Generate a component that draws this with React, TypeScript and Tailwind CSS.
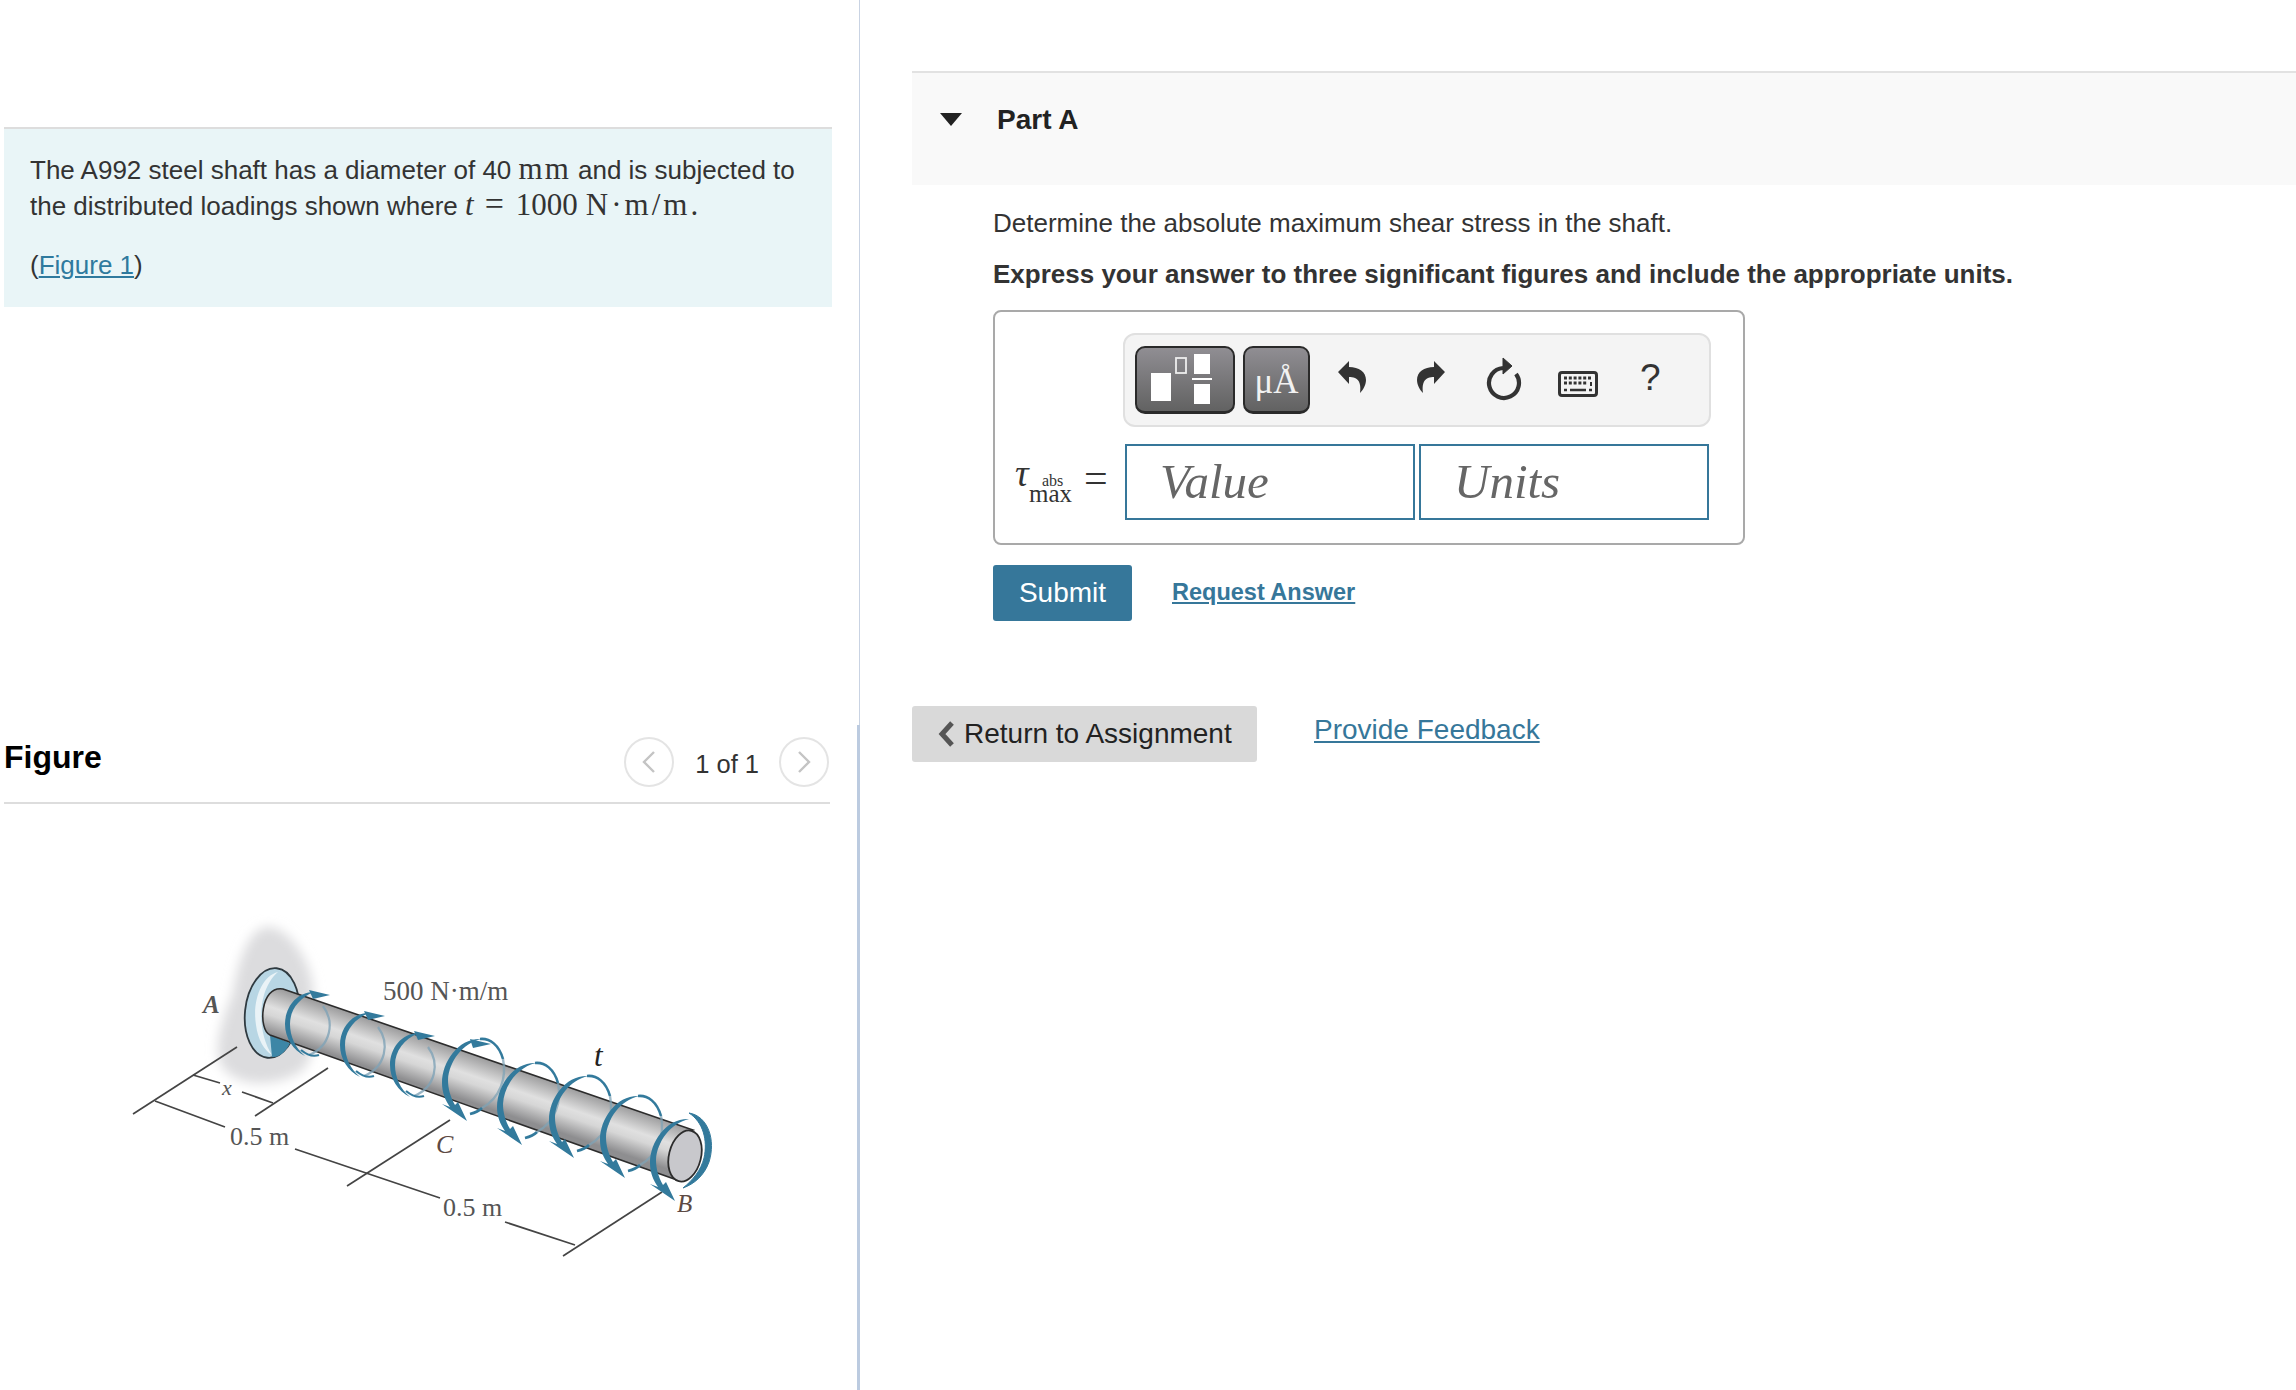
import React from 'react';

const sans = "font-['Liberation_Sans',Arial,sans-serif]";
const serif = "font-['Liberation_Serif','Times_New_Roman',serif]";

// near coils sit flatter on the shaft, the far ones have the big arrow
const smallCoils = [
  [287, 1024],
  [342, 1045],
  [392, 1065],
];
const bigCoils = [
  [445, 1083],
  [500, 1107],
  [552, 1120],
  [603, 1140],
  [653, 1163],
];
const blue = '#337a9c';

const ShaftFigure: React.FC = () => (
  <svg width="660" height="400" viewBox="100 900 660 400" className="block">
    <defs>
      <linearGradient id="shaft" gradientUnits="userSpaceOnUse" x1="283" y1="989" x2="268" y2="1033">
        <stop offset="0" stopColor="#9a9a9b" />
        <stop offset="0.45" stopColor="#e0e0e0" />
        <stop offset="0.62" stopColor="#d6d6d6" />
        <stop offset="1" stopColor="#8e8e90" />
      </linearGradient>
      <filter id="soft" x="-30%" y="-30%" width="160%" height="160%">
        <feGaussianBlur stdDeviation="6" />
      </filter>
    </defs>

    {/* wall */}
    <path
      d="M270 927 C292 930 312 965 313 990 C315 1030 316 1060 300 1072 C280 1084 245 1090 225 1070 C210 1055 222 1020 233 993 C238 960 250 925 270 927 Z"
      fill="#dcdcde"
      filter="url(#soft)"
    />

    {/* dimension lines */}
    <g stroke="#444" strokeWidth="1.7" fill="none">
      <path d="M133 1114 L237 1047" />
      <path d="M193 1075 L220 1083 M242 1092 L273 1103" />
      <path d="M255 1116 L328 1068" />
      <path d="M155 1101 L225 1127 M295 1149 L440 1198" />
      <path d="M347 1186 L450 1120" />
      <path d="M505 1222 L575 1245" />
      <path d="M563 1256 L662 1192" />
    </g>

    {/* flange */}
    <ellipse cx="272" cy="1013" rx="27" ry="45" transform="rotate(6 272 1013)" fill="#b8d6e4" stroke="#2f3a40" strokeWidth="1.8" />
    <path d="M278 972 C262 976 252 1000 256 1025 C258 1040 264 1050 272 1055 C262 1040 258 1015 264 995 C267 985 272 977 278 972 Z" fill="#eaf3f7" />
    <path d="M270 1035 L272 1057 C280 1058 287 1050 290 1043 Z" fill="#3d86a6" />

    {/* shaft */}
    <path
      d="M283 989 L693 1130 C680 1135 665 1160 677 1180 L270 1035 C258 1030 260 985 283 989 Z"
      fill="url(#shaft)"
      stroke="#2c2c2c"
      strokeWidth="1.6"
    />
    <ellipse cx="685" cy="1156" rx="16" ry="26" transform="rotate(14 685 1156)" fill="#c8c8cc" stroke="#2c2c2c" strokeWidth="1.8" />

    {/* torque coils */}
    {smallCoils.map(([x, y], i) => (
      <g key={i} transform={`translate(${x} ${y})`} fill="none">
        <path d="M36 -18 C48 -2 44 22 22 31" stroke="#7fa3b6" strokeWidth="2.2" opacity="0.8" />
        <path d="M27 -32 C9 -32 -2 -16 -2 0 C-2 14 6 26 18 32 C8 24 3 12 3 0 C3 -14 12 -26 27 -32 Z" fill={blue} />
        <path d="M14 26 C20 31 26 33 32 31" stroke={blue} strokeWidth="2.2" />
        <path d="M22 -34 L43 -29 L26 -25 Z" fill={blue} />
      </g>
    ))}
    {bigCoils.map(([x, y], i) => (
      <g key={i} transform={`translate(${x} ${y})`} fill="none">
        {i < 4 && <path d="M58 -24 C62 -5 55 15 37 25" stroke="#7fa3b6" strokeWidth="2.4" opacity="0.75" />}
        {i < 4 && <path d="M35 -44 C45 -45 54 -38 58 -24" stroke={blue} strokeWidth="2.6" />}
        <path d="M36 -44 C14 -45 -3 -22 -3 0 C-3 9 0 17 5 24 L-3 21 L22 38 L13 19 L10 22 C5 13 3 5 3 -3 C4 -22 18 -40 36 -44 Z" fill={blue} />
        {i < 4 && <path d="M25 31 C29 30 34 28 37 25" stroke={blue} strokeWidth="2.6" />}
        {i === 0 && <path d="M25 -44 L46 -39 L28 -35 Z" fill={blue} />}
      </g>
    ))}
    <path d="M689 1113 C708 1116 716 1140 709 1162 C704 1176 694 1184 683 1188 C693 1180 701 1170 704 1158 C708 1140 703 1122 689 1113 Z" fill={blue} stroke={blue} strokeWidth="1" />

    {/* labels */}
    <g fill="#555" className={serif}>
      <text x="203" y="1013" fontSize="25" fontStyle="italic" fontWeight="700">A</text>
      <text x="222" y="1095" fontSize="22" fontStyle="italic">x</text>
      <text x="230" y="1145" fontSize="26">0.5 m</text>
      <text x="383" y="1000" fontSize="27">500 N·m/m</text>
      <text x="436" y="1153" fontSize="26" fontStyle="italic" fill="#5d4a44">C</text>
      <text x="443" y="1216" fontSize="26">0.5 m</text>
      <text x="594" y="1066" fontSize="31" fontStyle="italic" fill="#222">t</text>
      <text x="677" y="1212" fontSize="25" fontStyle="italic" fill="#5d4a44">B</text>
    </g>
  </svg>
);

const PagerButton: React.FC<{ dir: 'left' | 'right' }> = ({ dir }) => (
  <div className="flex h-[50px] w-[50px] items-center justify-center rounded-full border-2 border-[#e4e4e4] bg-white">
    <svg width="16" height="24" viewBox="0 0 16 24" fill="none" stroke="#c4c4c4" strokeWidth="2.4">
      <path d={dir === 'left' ? 'M13 2 L3 12 L13 22' : 'M3 2 L13 12 L3 22'} />
    </svg>
  </div>
);

const Toolbar: React.FC = () => (
  <div className="flex h-[94px] w-[588px] items-center rounded-[12px] border-2 border-[#e0e0e0] bg-[#f4f4f4] pl-[10px]">
    <div className="h-[68px] w-[100px] rounded-[10px] border-2 border-b-[3px] border-[#2a2a2a] bg-gradient-to-b from-[#908e93] to-[#626262]">
      <svg width="96" height="63" viewBox="0 0 96 63" className="block">
        <rect x="14" y="25" width="20" height="28" fill="#fff" />
        <rect x="39" y="10" width="10" height="15" fill="none" stroke="#eee" strokeWidth="1.8" />
        <rect x="57" y="6" width="16" height="20" fill="#fff" />
        <rect x="55" y="30" width="20" height="2" fill="#fff" />
        <rect x="57" y="36" width="16" height="20" fill="#fff" />
      </svg>
    </div>
    <div className={`ml-2 flex h-[68px] w-[67px] items-end justify-center rounded-[10px] border-2 border-b-[3px] border-[#2a2a2a] bg-gradient-to-b from-[#908e93] to-[#626262] pb-[8px] text-[35px] leading-[42px] text-[#f2f2f2] ${serif}`}>
      μÅ
    </div>
    {/* undo */}
    <svg width="40" height="40" viewBox="0 0 40 40" className="ml-[23px] mb-[4px] block">
      <path d="M5 14 L16 3 L16 9 C26 9 33 14 33 22 C33 27 30 32 27 35 C28 28 27 22 22 20 C20 19 18 19 16 19 L16 26 Z" fill="#333" />
    </svg>
    {/* redo */}
    <svg width="40" height="40" viewBox="0 0 40 40" className="ml-[37px] mb-[4px] block -scale-x-100">
      <path d="M5 14 L16 3 L16 9 C26 9 33 14 33 22 C33 27 30 32 27 35 C28 28 27 22 22 20 C20 19 18 19 16 19 L16 26 Z" fill="#333" />
    </svg>
    {/* reset */}
    <svg width="40" height="44" viewBox="0 0 40 44" className="ml-[33px] mb-[2px] block">
      <path d="M20 11 A15 15 0 1 0 33 17" fill="none" stroke="#333" strokeWidth="4.2" />
      <path d="M20 1 L29 9 L20 17 Z" fill="#333" stroke="#333" strokeWidth="1" />
    </svg>
    {/* keyboard */}
    <svg width="40" height="26" viewBox="0 0 40 26" className="ml-[35px] mt-[7px] block">
      <rect x="1.5" y="1.5" width="37" height="23" rx="2.5" fill="#f4f4f4" stroke="#333" strokeWidth="3" />
      <path d="M6 7 H33 M6 12 H29" stroke="#333" strokeWidth="3" strokeDasharray="3 1.8" />
      <path d="M32 11 H34 V15 H32 Z" fill="#333" />
      <path d="M6 19 H9 M12 19 H28 M31 19 H34" stroke="#333" strokeWidth="2.6" />
    </svg>
    <span className={`ml-[42px] mb-[6px] text-[37px] leading-none text-[#333] ${sans}`}>?</span>
  </div>
);

const App: React.FC = () => {
  return (
    <div className={`flex h-[1390px] w-[2296px] overflow-hidden bg-white text-[#333] ${sans}`}>
      {/* problem side */}
      <div className="w-[857px] shrink-0 pl-[4px] pt-[127px]">
        <div className="h-[180px] w-[828px] border-t-2 border-[#dddddd] bg-[#e9f5f7] px-[26px] pt-[24px] text-[26px] leading-[34px]">
          <p className="h-[34px] whitespace-nowrap">
            The A992 steel shaft has a diameter of 40 <span className={`text-[31px] leading-none tracking-[2px] ${serif}`}>mm</span> and is subjected to
          </p>
          <p className="h-[34px] whitespace-nowrap">
            the distributed loadings shown where <span className={`text-[31px] italic leading-none ${serif}`}>t</span>
            <span className={`ml-[11px] mr-[12px] text-[34px] leading-none ${serif}`}>=</span>
            <span className={`text-[31px] leading-none ${serif}`}>1000</span>
            <span className={`ml-[8px] text-[31px] leading-none tracking-[3px] ${serif}`}>N·m/m.</span>
          </p>
          <p className="mt-[27px]">
            (<a className="text-[#2f7a9e] underline">Figure 1</a>)
          </p>
        </div>

        <div className="mt-[431px] flex h-[66px] w-[826px] items-start justify-between border-b-2 border-[#dddddd]">
          <h2 className="mt-[-3px] text-[32px] font-bold leading-[44px] text-black">Figure</h2>
          <div className="mr-[1px] mt-[-1px] flex items-center">
            <PagerButton dir="left" />
            <span className="ml-[21px] mr-[20px] mt-[4px] text-[25.5px] leading-[34px]">1 of 1</span>
            <PagerButton dir="right" />
          </div>
        </div>

        <div className="ml-[96px] mt-[96px]">
          <ShaftFigure />
        </div>
      </div>

      {/* pane divider */}
      <div className="flex h-full w-[3px] shrink-0 flex-col items-end">
        <div className="h-[725px] w-[1px] bg-[#c9d3e3]" />
        <div className="w-[3px] flex-1 bg-[#bccbe0]" />
      </div>

      {/* question side */}
      <div className="flex-1 pl-[52px] pt-[71px]">
        <div className="flex h-[114px] items-start border-t-2 border-[#e2e2e2] bg-[#f9f9f9] pl-[28px] pt-[26px]">
          <svg width="22" height="13" viewBox="0 0 22 13" className="mt-[14px] block">
            <path d="M0 0 H22 L11 13 Z" fill="#222" />
          </svg>
          <h3 className="ml-[35px] text-[28px] font-bold leading-[42px] text-[#222]">Part A</h3>
        </div>

        <div className="pl-[81px]">
          <p className="mt-[21px] text-[26px] leading-[34px]">Determine the absolute maximum shear stress in the shaft.</p>
          <p className="mt-[17px] text-[26px] font-bold leading-[34px]">
            Express your answer to three significant figures and include the appropriate units.
          </p>

          <div className="mt-[19px] h-[235px] w-[752px] rounded-[8px] border-2 border-[#a9a9a9] pl-[128px] pt-[21px]">
            <Toolbar />
            <div className="relative mt-[17px] flex items-center">
              <div className={`absolute left-[-108px] top-[11px] h-[50px] w-[100px] text-[#333] ${serif}`}>
                <span className="absolute left-[0px] top-[-2px] text-[38px] italic leading-[40px]">τ</span>
                <span className="absolute left-[27px] top-[20px] text-[16px] leading-[12px]">abs</span>
                <span className="absolute left-[14px] top-[32px] text-[25px] leading-[14px]">max</span>
                <span className="absolute left-[69px] top-[3px] text-[42px] leading-[40px]">=</span>
              </div>
              <div className={`ml-[2px] flex h-[76px] w-[290px] items-center border-2 border-[#36779a] pl-[33px] text-[49px] italic text-[#666] ${serif}`}>
                Value
              </div>
              <div className={`ml-[4px] flex h-[76px] w-[290px] items-center border-2 border-[#36779a] pl-[33px] text-[49px] italic text-[#666] ${serif}`}>
                Units
              </div>
            </div>
          </div>

          <div className="mt-[20px] flex items-center">
            <button className="h-[56px] w-[139px] rounded-[3px] bg-[#36779a] text-[28px] text-white">Submit</button>
            <a className="ml-[40px] text-[23.5px] font-bold text-[#36779a] underline">Request Answer</a>
          </div>
        </div>

        <div className="mt-[85px] flex items-start">
          <button className="flex h-[56px] w-[345px] items-center rounded-[3px] bg-[#d9d9d9] pl-[26px] text-[28px] text-[#222]">
            <svg width="18" height="26" viewBox="0 0 18 26" className="mr-[8px] block">
              <path d="M14 2 L4 13 L14 24" fill="none" stroke="#555" strokeWidth="5" />
            </svg>
            Return to Assignment
          </button>
          <a className="ml-[57px] mt-[3px] text-[28px] leading-[42px] text-[#36779a] underline">Provide Feedback</a>
        </div>
      </div>
    </div>
  );
};

export default App;
